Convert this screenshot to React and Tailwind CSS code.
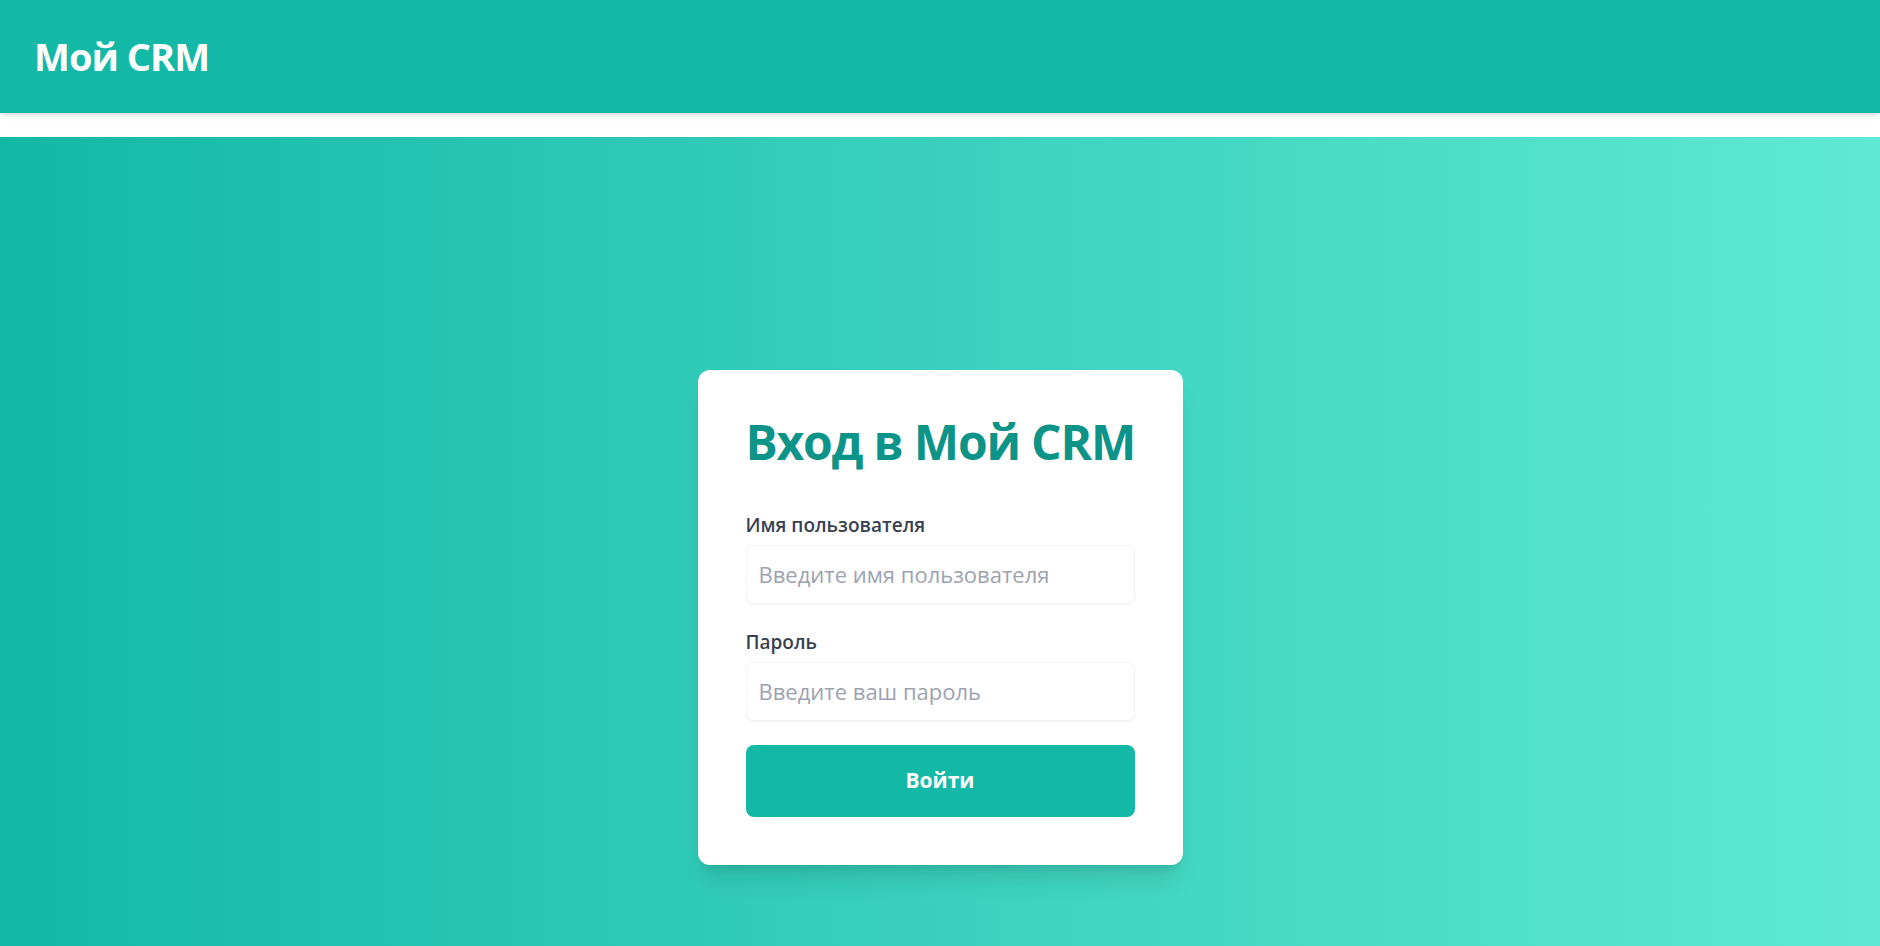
import React, { useState } from "react";

const font = { fontFamily: '"Open Sans", "Noto Sans", sans-serif' };

const Field = ({ id, label, type, placeholder, value, onChange, className }) => (
  <div className={className}>
    <label htmlFor={id} className="block text-[19px] leading-7 font-semibold text-[#374151] mb-1.5">
      {label}
    </label>
    <input
      id={id}
      type={type}
      value={value}
      onChange={(e) => onChange(e.target.value)}
      placeholder={placeholder}
      className="w-full h-[59px] px-3 text-[22px] text-[#374151] placeholder:text-[#9ca3af] bg-white rounded-lg border border-[#f5f5f5] shadow-xs outline-none"
    />
  </div>
);

const App = () => {
  const [username, setUsername] = useState("");
  const [password, setPassword] = useState("");

  return (
    <div className="min-h-screen bg-white" style={font}>
      {/* Header */}
      <header className="h-[113px] bg-[#14b8a6] shadow-md flex items-center px-[34px] relative z-10">
        <h1 className="text-[38px] font-bold text-white tracking-tight">Мой CRM</h1>
      </header>

      <div className="h-6 bg-white" />

      {/* Login */}
      <main className="min-h-screen pt-[14px] flex items-center justify-center bg-linear-to-r/srgb from-[#14b8a6] to-[#5eead4]">
        <form
          onSubmit={(e) => e.preventDefault()}
          className="w-[485px] bg-white rounded-xl shadow-xl p-12"
        >
          <h2 className="text-5xl leading-none font-bold text-[#0d9488] tracking-tight mb-[45px] whitespace-nowrap">
            Вход в Мой CRM
          </h2>

          <Field
            id="username"
            label="Имя пользователя"
            type="text"
            placeholder="Введите имя пользователя"
            value={username}
            onChange={setUsername}
          />

          <Field
            id="password"
            label="Пароль"
            type="password"
            placeholder="Введите ваш пароль"
            value={password}
            onChange={setPassword}
            className="mt-6"
          />

          <button
            type="submit"
            className="mt-6 w-full h-[72px] rounded-lg bg-[#14b8a6] text-white text-[21px] font-bold"
          >
            Войти
          </button>
        </form>
      </main>
    </div>
  );
};

export default App;
